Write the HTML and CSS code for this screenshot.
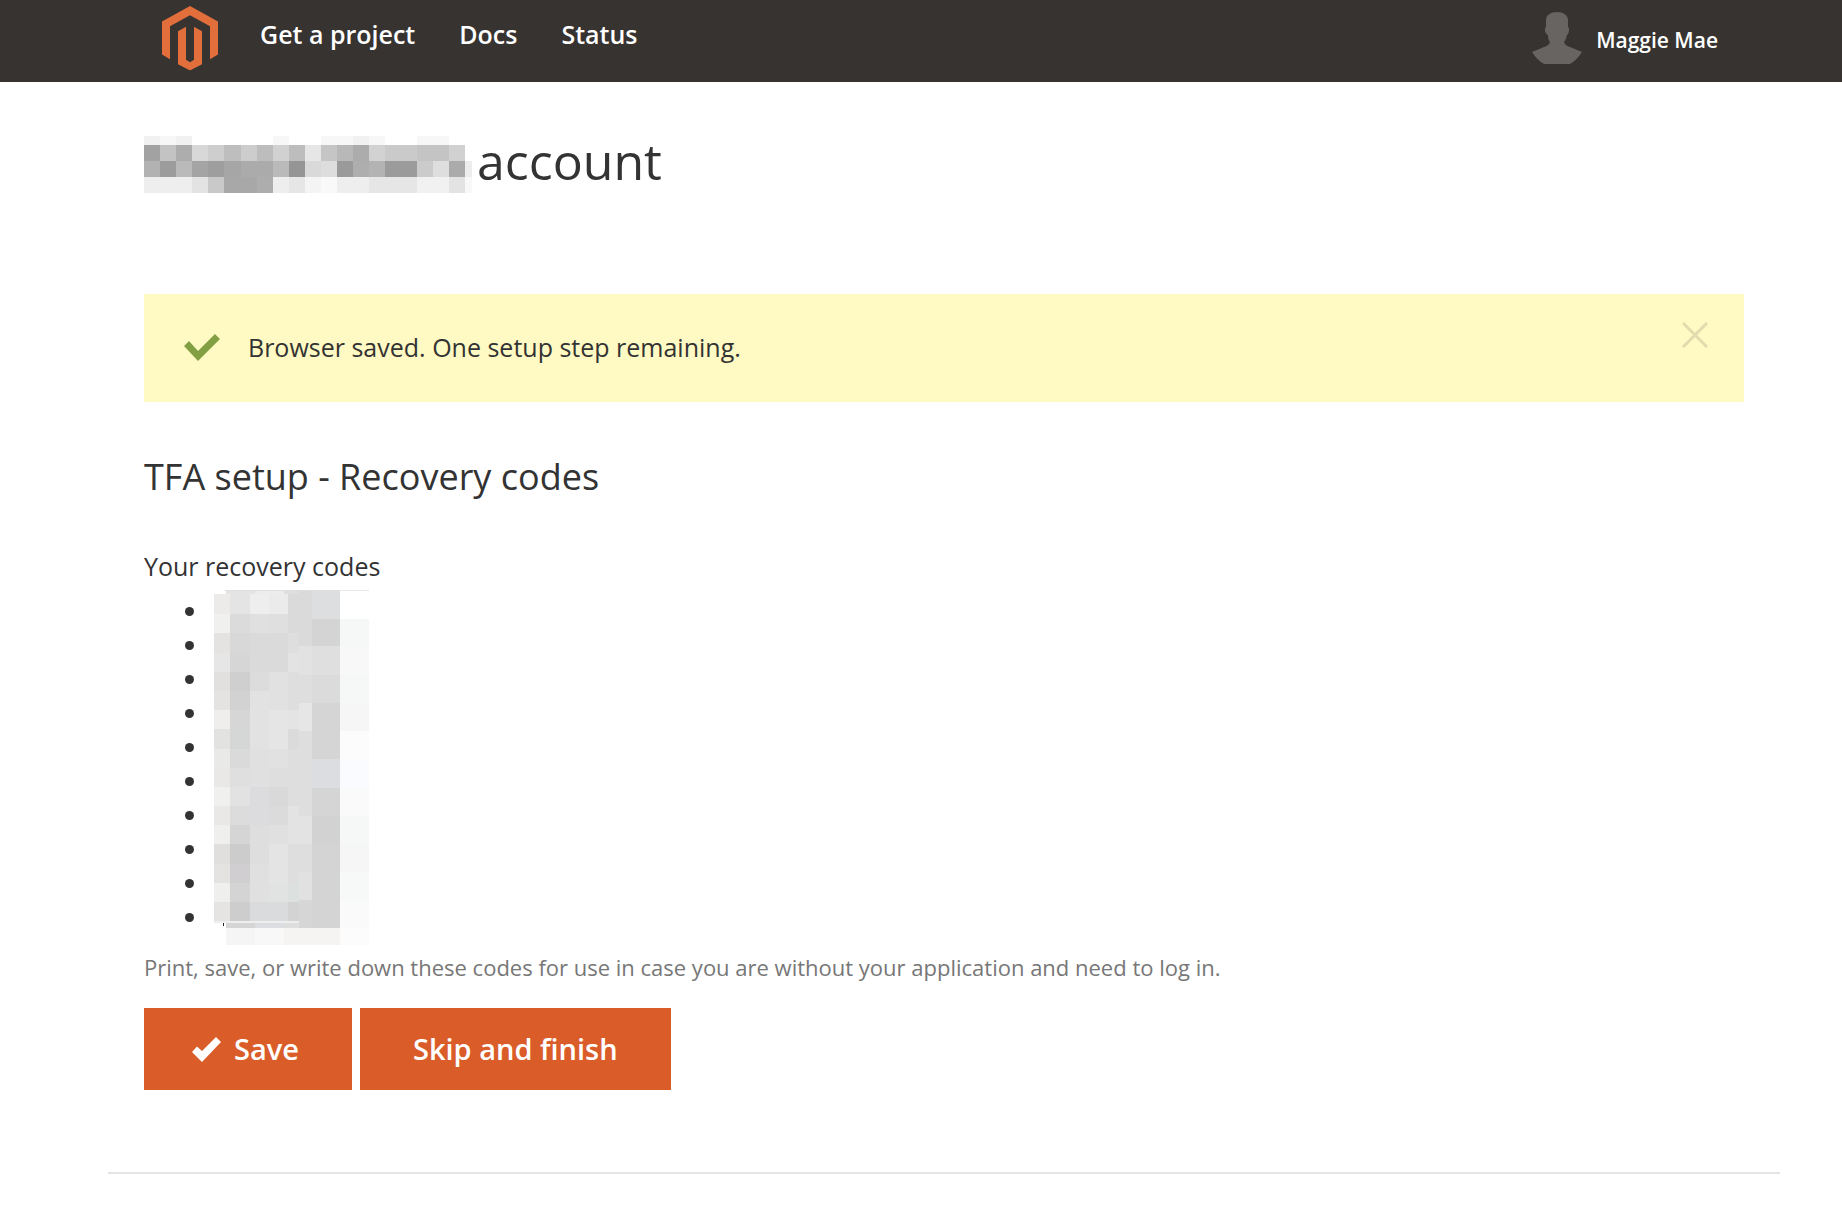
FILE: index.html
```html
<!DOCTYPE html>
<html lang="en">
<head>
<meta charset="utf-8">
<title>TFA setup - Recovery codes</title>
<link rel="stylesheet" href="styles.css">
</head>
<body>
<header class="topbar">
  <a class="logo" href="#" aria-label="Home">
    <svg width="56" height="64" viewBox="0 0 56 66" preserveAspectRatio="none"><path fill="#e26f3b" d="M28 0 56 16V50L48 55V21L28 9.500 8 21V55L0 50V16ZM24 21.500V55.500L28 58 32 55.500V21.500L40 26V60L28 66.500 16 60V26Z"/></svg>
  </a>
  <nav class="nav">
    <a href="#">Get a project</a>
    <a href="#">Docs</a>
    <a href="#">Status</a>
  </nav>
  <a class="user" href="#">
    <svg width="50" height="52" viewBox="0 0 50 52"><path fill="#686462" d="M25 0C31 0 36 3 36 8V15C38 16 37 22 35 23C34 27 33 29 32 30C33 33 35 34 38 35L50 40Q45 48 38 52H12Q5 48 0 40L12 35C15 34 17 33 18 30C17 29 16 27 16 23C13 22 12 16 14 15V8C14 3 19 0 25 0Z"/></svg>
    <span>Maggie Mae</span>
  </a>
</header>
<main class="page">
  <div class="content">
    <h1 class="title">
      <svg class="redacted-name" width="328" height="60" viewBox="0 0 328 60" shape-rendering="crispEdges" aria-hidden="true">
        <path fill="#f1f1f1" d="M0 1h16v9H0zM32 1h16v9H32zM209 1h16v9h-16z"/>
        <path fill="#f7f7f7" d="M16 1h16v9H16zM129 1h16v9h-16zM177 1h32v9h-32zM225 1h16v9h-16zM273 1h32v9h-32z"/>
        <g>
          <rect y="10" width="16" height="16" fill="#a2a2a2"/><rect x="16" y="10" width="16" height="16" fill="#c3c3c3"/><rect x="32" y="10" width="16" height="16" fill="#adadad"/><rect x="48" y="10" width="16" height="16" fill="#d8d8d8"/><rect x="64" y="10" width="16" height="16" fill="#cecece"/><rect x="80" y="10" width="17" height="16" fill="#bebebe"/><rect x="97" y="10" width="16" height="16" fill="#cdcdcd"/><rect x="113" y="10" width="16" height="16" fill="#bdbdbd"/><rect x="129" y="10" width="16" height="16" fill="#d1d1d1"/><rect x="145" y="10" width="16" height="16" fill="#bdbdbd"/><rect x="161" y="10" width="16" height="16" fill="#e6e6e6"/><rect x="177" y="10" width="16" height="16" fill="#c5c5c5"/><rect x="193" y="10" width="16" height="16" fill="#b8b8b8"/><rect x="209" y="10" width="16" height="16" fill="#acacac"/><rect x="225" y="10" width="16" height="16" fill="#d2d2d2"/><rect x="241" y="10" width="32" height="16" fill="#cacaca"/><rect x="273" y="10" width="32" height="16" fill="#c4c4c4"/><rect x="305" y="10" width="16" height="16" fill="#d1d1d1"/>
        </g>
        <g>
          <rect y="26" width="16" height="16" fill="#b2b2b2"/><rect x="16" y="26" width="16" height="16" fill="#9c9c9c"/><rect x="32" y="26" width="16" height="16" fill="#bababa"/><rect x="48" y="26" width="16" height="16" fill="#a4a4a4"/><rect x="64" y="26" width="16" height="16" fill="#9e9e9e"/><rect x="80" y="26" width="17" height="16" fill="#a6a6a6"/><rect x="97" y="26" width="32" height="16" fill="#ababab"/><rect x="129" y="26" width="16" height="16" fill="#bababa"/><rect x="145" y="26" width="16" height="16" fill="#959595"/><rect x="161" y="26" width="16" height="16" fill="#d9d9d9"/><rect x="177" y="26" width="16" height="16" fill="#dddddd"/><rect x="193" y="26" width="16" height="16" fill="#9a9a9a"/><rect x="209" y="26" width="16" height="16" fill="#aeaeae"/><rect x="225" y="26" width="16" height="16" fill="#b3b3b3"/><rect x="241" y="26" width="32" height="16" fill="#9b9b9b"/><rect x="273" y="26" width="16" height="16" fill="#cbcbcb"/><rect x="289" y="26" width="16" height="16" fill="#dedede"/><rect x="305" y="26" width="16" height="16" fill="#ababab"/><rect x="321" y="26" width="7" height="16" fill="#ededed"/>
        </g>
        <g>
          <rect y="42" width="48" height="16" fill="#eeeeee"/><rect x="48" y="42" width="16" height="16" fill="#e3e3e3"/><rect x="64" y="42" width="16" height="16" fill="#c9c9c9"/><rect x="80" y="42" width="33" height="16" fill="#a8a8a8"/><rect x="113" y="42" width="16" height="16" fill="#adadad"/><rect x="129" y="42" width="16" height="16" fill="#eeeeee"/><rect x="145" y="42" width="16" height="16" fill="#e6e6e6"/><rect x="161" y="42" width="16" height="16" fill="#f4f4f4"/><rect x="177" y="42" width="16" height="16" fill="#f9f9f9"/><rect x="193" y="42" width="32" height="16" fill="#eeeeee"/><rect x="225" y="42" width="48" height="16" fill="#e6e6e6"/><rect x="273" y="42" width="32" height="16" fill="#f1f1f1"/><rect x="305" y="42" width="16" height="16" fill="#e3e3e3"/><rect x="321" y="42" width="7" height="16" fill="#f8f8f8"/>
        </g>
      </svg>
      <span>account</span>
    </h1>

    <div class="alert" role="status">
      <svg class="alert-icon" width="36" height="27" viewBox="0 0 36 27"><path fill="#82a043" d="M0 12 5 7 14 17 31 0 36 5 14 27Z"/></svg>
      <p class="alert-text">Browser saved. One setup step remaining.</p>
      <button class="alert-close" type="button" aria-label="Close">
        <svg width="26" height="26" viewBox="0 0 26 26"><path fill="none" stroke="#e1dcae" stroke-width="3" d="M1 1 25 25M25 1 1 25"/></svg>
      </button>
    </div>

    <h2 class="subtitle">TFA setup - Recovery codes</h2>

    <form class="codes-form">
      <p class="codes-label">Your recovery codes</p>
      <div class="codes">
        <ul class="codes-list">
          <li></li><li></li><li></li><li></li><li></li><li></li><li></li><li></li><li></li><li></li>
        </ul>
        <svg class="codes-mask" width="156" height="355" viewBox="0 0 156 355" shape-rendering="crispEdges" aria-hidden="true">
          <rect x="10" width="145" height="1" fill="#e6e6e6"/>
          <rect x="12" width="114" height="338" fill="#dedede"/>
          <rect x="12" y="1" width="29" height="3" fill="#e4e4e4"/><rect x="41" y="1" width="29" height="3" fill="#ececec"/>
          <g>
            <rect y="4" width="16" height="20" fill="#edebe9"/><rect y="24" width="16" height="19" fill="#f0f0ef"/><rect y="43" width="16" height="20" fill="#e4e3e1"/><rect y="63" width="16" height="19" fill="#e6e6e6"/><rect y="82" width="16" height="19" fill="#e1e0df"/><rect y="101" width="16" height="19" fill="#e4e3e1"/><rect y="120" width="16" height="19" fill="#efeeec"/><rect y="139" width="16" height="20" fill="#e2e3e1"/><rect y="159" width="16" height="19" fill="#e9e9e8"/><rect y="178" width="16" height="19" fill="#eae8e6"/><rect y="197" width="16" height="19" fill="#f0f0ef"/><rect y="216" width="16" height="19" fill="#e9e8e6"/><rect y="235" width="16" height="19" fill="#efefee"/><rect y="254" width="16" height="20" fill="#e0dfdd"/><rect y="274" width="16" height="19" fill="#e4e3e1"/><rect y="293" width="16" height="19" fill="#efefed"/><rect y="312" width="16" height="19" fill="#e5e4e2"/>
          </g>
          <g>
            <rect x="16" y="4" width="20" height="20" fill="#e4e4e4"/><rect x="16" y="24" width="20" height="19" fill="#dbdbdc"/><rect x="16" y="43" width="20" height="20" fill="#d8d8d8"/><rect x="16" y="63" width="20" height="19" fill="#d6d6d6"/><rect x="16" y="82" width="20" height="19" fill="#cfcfcf"/><rect x="16" y="101" width="20" height="19" fill="#d2d2d2"/><rect x="16" y="120" width="20" height="19" fill="#d6d6d6"/><rect x="16" y="139" width="20" height="20" fill="#d4d7d6"/><rect x="16" y="159" width="20" height="19" fill="#dadada"/><rect x="16" y="178" width="20" height="19" fill="#dfdfdf"/><rect x="16" y="197" width="20" height="19" fill="#e2e2e2"/><rect x="16" y="216" width="20" height="19" fill="#dcdcdc"/><rect x="16" y="235" width="20" height="19" fill="#d5d5d5"/><rect x="16" y="254" width="20" height="20" fill="#cccccc"/><rect x="16" y="274" width="20" height="19" fill="#d0ced1"/><rect x="16" y="293" width="20" height="19" fill="#d4d4d4"/><rect x="16" y="312" width="20" height="19" fill="#cdcdcd"/>
          </g>
          <g>
            <rect x="36" y="4" width="19" height="20" fill="#eeeeee"/><rect x="36" y="24" width="19" height="19" fill="#e0e0e1"/><rect x="36" y="43" width="19" height="39" fill="#dadada"/><rect x="36" y="82" width="19" height="19" fill="#dcdcdd"/><rect x="36" y="101" width="19" height="58" fill="#e2e2e2"/><rect x="36" y="159" width="19" height="38" fill="#e0e0e0"/><rect x="36" y="197" width="19" height="38" fill="#dcdcdf"/><rect x="36" y="235" width="19" height="39" fill="#dedede"/><rect x="36" y="274" width="19" height="38" fill="#e0e0e0"/><rect x="36" y="312" width="38" height="19" fill="#d9dbdd"/>
          </g>
          <g>
            <rect x="55" y="4" width="19" height="20" fill="#ebebeb"/><rect x="55" y="24" width="19" height="19" fill="#dfdfdf"/><rect x="55" y="43" width="19" height="39" fill="#dadada"/><rect x="55" y="82" width="19" height="38" fill="#e1e1e1"/><rect x="55" y="120" width="19" height="39" fill="#e5e5e5"/><rect x="55" y="159" width="19" height="19" fill="#e1e1e1"/><rect x="55" y="178" width="19" height="19" fill="#dedede"/><rect x="55" y="197" width="19" height="19" fill="#d9d9d9"/><rect x="55" y="216" width="19" height="19" fill="#dbdbdb"/><rect x="55" y="235" width="19" height="19" fill="#e0e0e0"/><rect x="55" y="254" width="19" height="39" fill="#e4e4e4"/><rect x="55" y="293" width="19" height="19" fill="#e0e3e2"/>
          </g>
          <g>
            <rect x="74" y="4" width="11" height="39" fill="#dadada"/><rect x="74" y="63" width="11" height="19" fill="#e3e3e3"/><rect x="74" y="120" width="11" height="19" fill="#e4e4e4"/><rect x="74" y="139" width="11" height="20" fill="#dbdbdb"/><rect x="74" y="216" width="11" height="38" fill="#e3e3e3"/><rect x="74" y="293" width="11" height="19" fill="#dce0de"/><rect x="74" y="312" width="11" height="19" fill="#d3d3d3"/>
            <rect x="85" y="1" width="13" height="55" fill="#dadada"/><rect x="85" y="56" width="13" height="29" fill="#e2e2e2"/><rect x="85" y="113" width="13" height="28" fill="#e6e6e6"/><rect x="85" y="226" width="13" height="28" fill="#e3e3e3"/><rect x="85" y="282" width="13" height="28" fill="#e1e1e1"/><rect x="85" y="310" width="13" height="28" fill="#d6d6d6"/>
          </g>
          <g>
            <rect x="98" width="28" height="29" fill="#dddee0"/><rect x="98" y="29" width="28" height="27" fill="#d4d4d4"/><rect x="98" y="56" width="28" height="29" fill="#dfdfdf"/><rect x="98" y="85" width="28" height="28" fill="#dbdbdb"/><rect x="98" y="113" width="28" height="56" fill="#d5d5d5"/><rect x="98" y="169" width="28" height="29" fill="#dbdde0"/><rect x="98" y="198" width="28" height="28" fill="#d5d5d5"/><rect x="98" y="226" width="28" height="28" fill="#d2d2d2"/><rect x="98" y="254" width="28" height="84" fill="#d4d4d4"/>
            <rect x="126" y="29" width="29" height="28" fill="#f6f8f7"/><rect x="126" y="57" width="29" height="28" fill="#f8f8f8"/><rect x="126" y="85" width="29" height="28" fill="#f5f8f7"/><rect x="126" y="113" width="29" height="28" fill="#f6f6f6"/><rect x="126" y="141" width="29" height="28" fill="#fcfcfc"/><rect x="126" y="169" width="29" height="29" fill="#fafbfe"/><rect x="126" y="198" width="29" height="28" fill="#fafafa"/><rect x="126" y="226" width="29" height="28" fill="#f6f8f7"/><rect x="126" y="254" width="29" height="28" fill="#f6f6f6"/><rect x="126" y="282" width="29" height="28" fill="#f6f9f8"/><rect x="126" y="310" width="29" height="28" fill="#fafafa"/>
          </g>
          <rect y="331" width="85" height="2" fill="#eeeeee"/><rect y="333" width="12" height="5" fill="#ffffff"/><rect x="9" y="333" width="1" height="3" fill="#222222"/>
          <rect x="12" y="333" width="29" height="5" fill="#d5d5d5"/><rect x="41" y="333" width="29" height="5" fill="#dbdde1"/>
          <rect x="12" y="338" width="29" height="17" fill="#f5f5f5"/><rect x="41" y="338" width="29" height="17" fill="#f8f8f9"/><rect x="70" y="338" width="56" height="17" fill="#f6f4f3"/><rect x="126" y="338" width="29" height="17" fill="#fcfcfc"/>
        </svg>
      </div>
      <p class="help">Print, save, or write down these codes for use in case you are without your application and need to log in.</p>
      <div class="actions">
        <button class="btn btn-save" type="submit">
          <svg width="29" height="25" viewBox="0 0 29 25"><path fill="#fff" d="M0 15 5 9.500 10 14 24 0 29 5 10 25Z"/></svg>
          <span>Save</span>
        </button>
        <button class="btn" type="button">Skip and finish</button>
      </div>
    </form>
  </div>
  <hr class="rule">
</main>
</body>
</html>
```
FILE: styles.css
```css
* { box-sizing: border-box; }

body {
  margin: 0;
  background: #fff;
  color: #333;
  font-family: "Open Sans", "Noto Sans", sans-serif;
  font-size: 25px;
  line-height: 34px;
}

h1, h2, p, ul { margin: 0; padding: 0; font-weight: 400; }
svg { display: block; flex: none; }
a { color: inherit; text-decoration: none; }

.topbar {
  display: flex;
  align-items: flex-start;
  height: 82px;
  padding: 6px 124px 0 162px;
  background: #373330;
  color: #fff;
  font-weight: 600;
}
.nav { display: flex; gap: 44px; margin: 11px 0 0 42px; }
.user {
  display: flex;
  gap: 14px;
  margin: 6px 0 0 auto;
  font-size: 21px;
  line-height: 56px;
}

.page { padding: 0 62px 32px 108px; }
.content { padding: 0 36px; }

.title {
  display: flex;
  align-items: flex-start;
  gap: 5px;
  padding-top: 53px;
  font-size: 50px;
  line-height: 52px;
}

.alert {
  display: flex;
  align-items: center;
  height: 108px;
  margin-top: 99px;
  padding: 0 36px 2px 40px;
  background: #fffac3;
}
.alert-text { margin-left: 28px; }
.alert-close {
  align-self: flex-start;
  margin: 28px 0 0 auto;
  padding: 0;
  border: 0;
  background: none;
  cursor: pointer;
}

.subtitle { margin-top: 50px; font-size: 36px; line-height: 50px; }

.codes-label { margin-top: 47px; }
.codes { position: relative; margin-top: 11px; }
.codes-list { padding-left: 66px; }
.codes-list li { height: 34px; }
.codes-mask { position: absolute; top: -4px; left: 70px; }

.help { margin-top: 16px; color: #777; font-size: 22px; }

.actions { display: flex; gap: 8px; margin-top: 24px; }
.btn {
  display: flex;
  align-items: center;
  gap: 13px;
  height: 82px;
  padding: 0 53px;
  border: 0;
  background: #da5c29;
  color: #fff;
  font: 600 29px/36px "Open Sans", "Noto Sans", sans-serif;
  cursor: pointer;
}
.btn-save { padding-left: 48px; }

.rule { height: 2px; margin: 82px 0 0; border: 0; background: #e5e5e5; }
```
